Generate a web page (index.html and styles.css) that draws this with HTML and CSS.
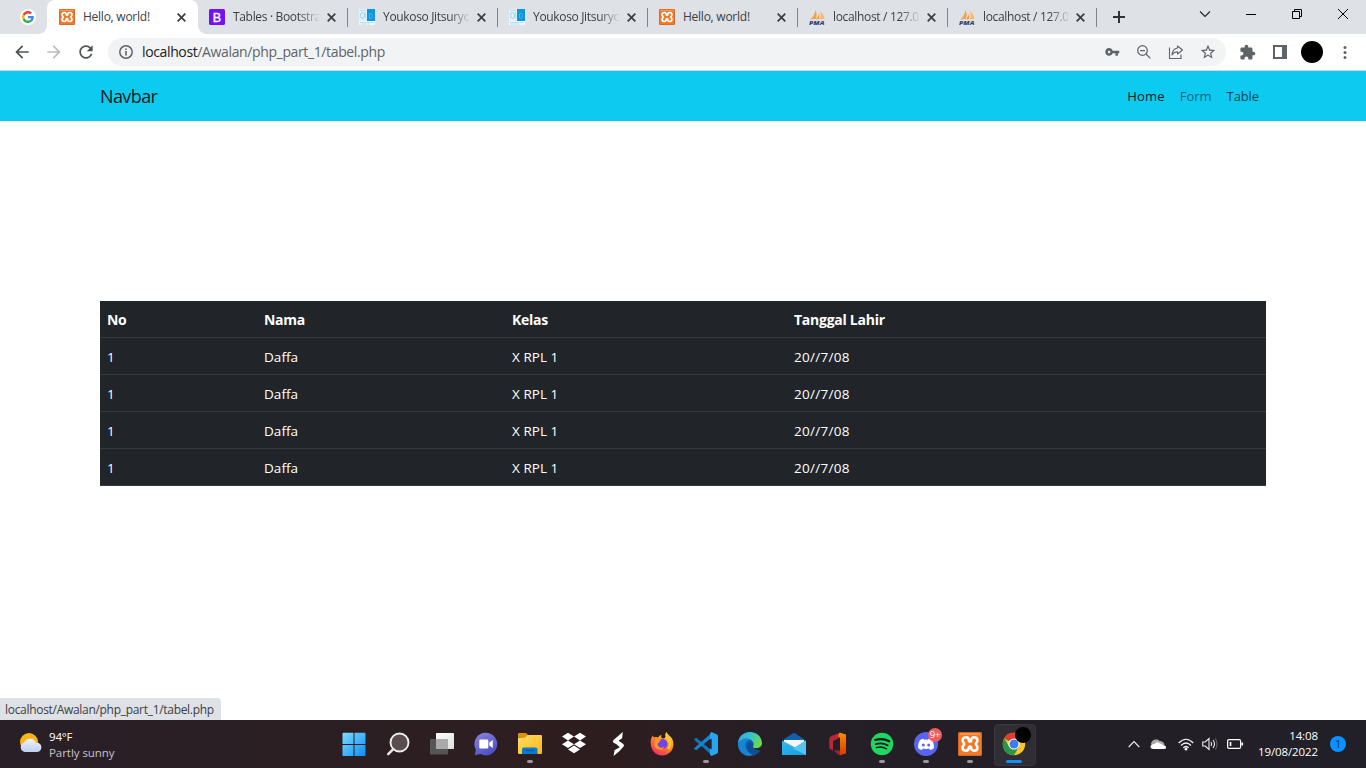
FILE: index.html
```html
<!DOCTYPE html>
<html lang="en">
<head>
<meta charset="utf-8">
<title>Hello, world!</title>
<link rel="stylesheet" href="styles.css">
</head>
<body>
<svg class="defs" width="0" height="0" aria-hidden="true">
  <defs>
    <linearGradient id="gWin" x1="0" y1="0" x2="1" y2="1"><stop offset="0" stop-color="#7fdcff"/><stop offset="1" stop-color="#0b8df5"/></linearGradient>
    <linearGradient id="gChat" x1="0" y1="0" x2="0.6" y2="1"><stop offset="0" stop-color="#8f83dd"/><stop offset="1" stop-color="#4b50c4"/></linearGradient>
    <linearGradient id="gFold" x1="0" y1="0" x2="1" y2="1"><stop offset="0" stop-color="#ffdc68"/><stop offset="1" stop-color="#fdb916"/></linearGradient>
    <linearGradient id="gFox" x1="0.8" y1="0" x2="0.2" y2="1"><stop offset="0" stop-color="#ffe03c"/><stop offset=".45" stop-color="#ff8a1e"/><stop offset="1" stop-color="#f5236d"/></linearGradient>
    <linearGradient id="gEdge" x1="0" y1="0" x2="1" y2=".5"><stop offset="0" stop-color="#2ba8df"/><stop offset=".5" stop-color="#35c1cf"/><stop offset="1" stop-color="#6ad94a"/></linearGradient>
    <linearGradient id="gMail" x1="0" y1="0" x2="1" y2="1"><stop offset="0" stop-color="#35baf0"/><stop offset="1" stop-color="#159be0"/></linearGradient>
    <linearGradient id="gOff" x1="0" y1="0" x2="0" y2="1"><stop offset="0" stop-color="#ff8a00"/><stop offset="1" stop-color="#d83a00"/></linearGradient>
    <linearGradient id="gCloud" x1="0" y1="0" x2="0" y2="1"><stop offset="0" stop-color="#f1f5fc"/><stop offset="1" stop-color="#bccff0"/></linearGradient>
    <linearGradient id="gView" x1="0" y1="0" x2="1" y2="1"><stop offset="0" stop-color="#ffffff"/><stop offset="1" stop-color="#dedede"/></linearGradient>
  </defs>
  <symbol id="xampp" viewBox="0 0 24 24">
    <rect width="24" height="24" rx="1.5" fill="#dc6420"/><rect x="1" y="1" width="22" height="22" rx="1" fill="#f07a2c"/><path d="M2 2h20" stroke="#f9a468" stroke-width="1.200"/>
    <path d="M8 5.300c1.800 0 2.800 1 2.800 2.900q0 1.300 1.200 1.300t1.200-1.300c0-1.900 1-2.900 2.800-2.900 2.200 0 3.400 1.200 3.400 3.300 0 1.800-1.600 2.300-1.600 3.400s1.600 1.600 1.600 3.400c0 2.100-1.200 3.300-3.400 3.300-1.800 0-2.800-1-2.800-2.900q0-1.300-1.200-1.300t-1.200 1.300c0 1.900-1 2.900-2.800 2.900-2.200 0-3.400-1.200-3.400-3.300 0-1.800 1.600-2.300 1.600-3.400S4.600 10.400 4.600 8.600c0-2.100 1.200-3.300 3.400-3.300z" fill="none" stroke="#fff" stroke-width="2.500"/>
  </symbol>
  <symbol id="pma" viewBox="0 0 16 16">
    <path d="M6.500 1C6 5 4 8 2 10.500l5-.8C8 7 7.800 4 6.500 1z" fill="#f6a23b"/><path d="M10.500 0C11 4 9 8 7 10.500l3-.5z" fill="#f89c2c"/><path d="M11 2c3 2.500 4 5 4.500 8l-4.500.2c1-3 1-5 0-8.200z" fill="#f9b964"/><path d="M4.300 4.500C4 7 2.500 9 1 11l2-.4z" fill="#d3c3a5"/>
    <text x="0" y="15.500" font-family="Open Sans, sans-serif" font-size="5.800" font-weight="800" font-style="italic" fill="#3c3f72" textLength="15.500" lengthAdjust="spacingAndGlyphs">PMA</text>
  </symbol>
  <symbol id="youkoso" viewBox="0 0 16 16">
    <rect x="0" width="8" height="12" fill="#dff2fb"/><rect x="8" width="8" height="12" fill="#0b96df"/><rect y="12" width="16" height="4" fill="#eef8fd"/>
    <ellipse cx="3.500" cy="6.500" rx="2" ry="3" fill="none" stroke="#92d4f2"/><path d="M1 1.500h6M6.500 3v7" stroke="#b6e0f4"/><path d="M10.500 4.500h1.500q1.500 0 1.500 2.300T12 9.200h-1.500z" fill="none" stroke="#65b9e6" stroke-width=".7"/><path d="M1 13.500h14M2 15h9" stroke="#9bd7ef" stroke-dasharray="1.500 .8"/>
  </symbol>
  <symbol id="x" viewBox="0 0 9 9"><path d="M.7.7l7.600 7.600M8.300.7L.7 8.300" stroke="#3c4043" stroke-width="1.800"/></symbol>
  <symbol id="back" viewBox="0 0 24 24"><path d="M20 11H7.830l5.590-5.590L12 4l-8 8 8 8 1.410-1.410L7.830 13H20v-2z"/></symbol>
</svg>

<div class="tabs">
  <div class="pin"><svg viewBox="0 0 64 64" width="16" height="16"><circle cx="32" cy="32" r="32" fill="#fff"/><g transform="translate(8 8)"><path fill="#ea4335" d="M24 9.500c3.540 0 6.710 1.220 9.210 3.600l6.850-6.850C35.900 2.380 30.470 0 24 0 14.620 0 6.510 5.380 2.560 13.220l7.980 6.190C12.430 13.720 17.740 9.500 24 9.500z"/><path fill="#4285f4" d="M46.980 24.550c0-1.570-.15-3.090-.38-4.550H24v9.020h12.940c-.58 2.960-2.260 5.480-4.780 7.180l7.730 6c4.510-4.180 7.090-10.360 7.090-17.650z"/><path fill="#fbbc05" d="M10.530 28.590c-.48-1.450-.76-2.990-.76-4.590s.27-3.140.76-4.590l-7.980-6.190C.92 16.460 0 20.120 0 24c0 3.880.92 7.540 2.560 10.780l7.970-6.190z"/><path fill="#34a853" d="M24 48c6.480 0 11.930-2.130 15.890-5.810l-7.730-6c-2.150 1.450-4.920 2.300-8.160 2.300-6.260 0-11.570-4.220-13.470-9.910l-7.980 6.190C6.510 42.620 14.620 48 24 48z"/></g></svg></div>
  <div class="tab active"><svg class="fav"><use href="#xampp"/></svg><span class="title">Hello, world!</span><svg class="close"><use href="#x"/></svg></div>
  <div class="tab"><svg class="fav" viewBox="0 0 16 16"><rect width="16" height="16" rx="1.500" fill="#7412f6"/><text x="8" y="12.500" text-anchor="middle" font-family="Liberation Sans, sans-serif" font-size="12.500" fill="#fff" stroke="#fff" stroke-width=".4">B</text></svg><span class="title fade">Tables · Bootstra</span><svg class="close"><use href="#x"/></svg></div>
  <div class="tab"><svg class="fav"><use href="#youkoso"/></svg><span class="title fade">Youkoso Jitsuryo</span><svg class="close"><use href="#x"/></svg></div>
  <div class="tab"><svg class="fav"><use href="#youkoso"/></svg><span class="title fade">Youkoso Jitsuryo</span><svg class="close"><use href="#x"/></svg></div>
  <div class="tab"><svg class="fav"><use href="#xampp"/></svg><span class="title">Hello, world!</span><svg class="close"><use href="#x"/></svg></div>
  <div class="tab"><svg class="fav"><use href="#pma"/></svg><span class="title fade local">localhost / 127.0</span><svg class="close"><use href="#x"/></svg></div>
  <div class="tab last"><svg class="fav"><use href="#pma"/></svg><span class="title fade local">localhost / 127.0</span><svg class="close"><use href="#x"/></svg></div>
  <svg class="plus" width="12" height="12"><path d="M6 0v12M0 6h12" stroke="#303336" stroke-width="2"/></svg>
  <div class="winctl">
    <svg width="46" height="28"><path d="M18 11.500l5 5 5-5" fill="none" stroke="#222" stroke-width="1.100"/></svg>
    <svg width="46" height="28"><path d="M18 14.500h10" stroke="#000"/></svg>
    <svg width="46" height="28"><path d="M18.500 11.500h7v7h-7zM20.500 11.500v-2h7v7h-2" fill="none" stroke="#000"/></svg>
    <svg width="46" height="28"><path d="M18 9l10 10M28 9L18 19" stroke="#000" stroke-width="1"/></svg>
  </div>
</div>

<div class="toolbar">
  <svg class="nav" viewBox="0 0 24 24"><use href="#back"/></svg>
  <svg class="nav off" viewBox="0 0 24 24"><g transform="translate(24) scale(-1 1)"><use href="#back"/></g></svg>
  <svg class="nav" viewBox="0 0 24 24"><path d="M17.650 6.350C16.200 4.900 14.210 4 12 4c-4.420 0-7.990 3.580-7.990 8s3.570 8 7.990 8c3.730 0 6.840-2.550 7.730-6h-2.080c-.82 2.330-3.040 4-5.650 4-3.310 0-6-2.690-6-6s2.690-6 6-6c1.660 0 3.140.69 4.220 1.780L13 11h7V4l-2.350 2.350z"/></svg>
  <div class="omnibox">
    <svg class="info" width="14" height="14"><circle cx="7" cy="7" r="6.200" fill="none" stroke="#5f6368" stroke-width="1.500"/><path d="M7 6v4.500M7 3.500v1.500" stroke="#5f6368" stroke-width="1.600"/></svg>
    <span class="url"><b>localhost</b>/Awalan/php_part_1/tabel.php</span>
    <svg class="act" viewBox="0 0 24 24"><path d="M12.650 10C11.830 7.670 9.610 6 7 6c-3.310 0-6 2.690-6 6s2.690 6 6 6c2.610 0 4.830-1.670 5.650-4H17v4h4v-4h2v-4H12.650zM7 14c-1.100 0-2-.9-2-2s.9-2 2-2 2 .9 2 2-.9 2-2 2z" transform="translate(1 0) scale(.95) translate(0 .5)"/></svg>
    <svg class="act" viewBox="0 0 16 16"><g fill="none" stroke="#5f6368" stroke-width="1.250"><circle cx="6.500" cy="6.500" r="4.800"/><path d="M10.200 10.200l4.200 4.200M4 6.500h5"/></g></svg>
    <svg class="act" viewBox="0 0 16 16"><g fill="none" stroke="#5f6368" stroke-width="1.100"><path d="M1.500 3.500v11h11.500v-4"/><path d="M9.500 2l5 4-5 4V7.800c-2.500 0-4 .8-5.500 3.200.3-4 2.200-6.500 5.500-7z" stroke-linejoin="round"/></g></svg>
    <svg class="act star" viewBox="1 1 22 22"><path d="M22 9.240l-7.190-.62L12 2 9.190 8.630 2 9.240l5.460 4.730L5.820 21 12 17.270 18.180 21l-1.630-7.030L22 9.240zM12 15.400l-3.760 2.270 1-4.280-3.320-2.880 4.380-.38L12 6.100l1.710 4.040 4.380.38-3.320 2.880 1 4.280L12 15.400z"/></svg>
  </div>
  <svg class="ext" viewBox="0 0 24 24"><path d="M20.500 11H19V7c0-1.100-.9-2-2-2h-4V3.500C13 2.120 11.880 1 10.500 1S8 2.120 8 3.500V5H4c-1.100 0-1.990.9-1.990 2v3.800H3.500c1.490 0 2.700 1.210 2.700 2.700s-1.210 2.700-2.700 2.700H2V20c0 1.100.9 2 2 2h3.800v-1.500c0-1.490 1.210-2.700 2.700-2.700 1.490 0 2.700 1.210 2.700 2.700V22H17c1.100 0 2-.9 2-2v-4h1.500c1.380 0 2.500-1.120 2.500-2.500S21.880 11 20.500 11z"/></svg>
  <svg class="panel" width="14" height="14"><path d="M0 0h14v14H0zM2 2v10h7V2z" fill-rule="evenodd"/></svg>
  <div class="avatar"></div>
  <svg class="dots" width="4" height="16"><circle cx="2" cy="3.500" r="1.500"/><circle cx="2" cy="8.500" r="1.500"/><circle cx="2" cy="13.500" r="1.500"/></svg>
</div>

<main class="page">
  <nav class="navbar">
    <a class="brand">Navbar</a>
    <ul class="links"><li class="current">Home</li><li>Form</li><li class="hovered">Table</li></ul>
  </nav>
  <table class="table">
    <colgroup><col class="c1"><col class="c2"><col class="c3"><col></colgroup>
    <thead><tr><th>No</th><th>Nama</th><th>Kelas</th><th>Tanggal Lahir</th></tr></thead>
    <tbody>
      <tr><td>1</td><td>Daffa</td><td>X RPL 1</td><td class="born">20//7/08</td></tr>
      <tr><td>1</td><td>Daffa</td><td>X RPL 1</td><td class="born">20//7/08</td></tr>
      <tr><td>1</td><td>Daffa</td><td>X RPL 1</td><td class="born">20//7/08</td></tr>
      <tr><td>1</td><td>Daffa</td><td>X RPL 1</td><td class="born">20//7/08</td></tr>
    </tbody>
  </table>
  <div class="status"><span>localhost/Awalan/php_part_1/tabel.php</span></div>
</main>

<footer class="taskbar">
  <div class="weather">
    <svg width="23" height="22" viewBox="0 0 23 22"><circle cx="10" cy="10" r="9" fill="#fdb515"/><path d="M5.500 20a5 5 0 0 1-.3-9.600 6.300 6.300 0 0 1 11.600.3h1a4.600 4.600 0 0 1 0 9.300z" fill="url(#gCloud)"/><path d="M4 14c4-1.500 7 .5 8 2.500" fill="none" stroke="#c5d3ec" stroke-width=".7"/></svg>
    <div><div class="temp">94°F</div><div class="cond">Partly sunny</div></div>
  </div>
  <div class="apps">
    <div class="app"><svg viewBox="0 0 24 24"><path d="M.5 1.500q0-.8.8-.8H11.500V12H.5zM12.500.7H23q.5 0 .5.8V12h-11zM.5 13h11v11H1.300q-.8 0-.8-.8zM12.500 13h11v10.200q0 .8-.8.8H12.500z" fill="url(#gWin)"/></svg></div>
    <div class="app"><svg viewBox="0 0 24 24"><circle cx="13.500" cy="10.500" r="9" fill="#594d4f" stroke="#eee" stroke-width="1.900"/><path d="M7.200 17.200l-5 5" stroke="#e5e5e5" stroke-width="2.500" stroke-linecap="round"/></svg></div>
    <div class="app"><svg viewBox="0 0 24 24"><rect x="6" y="1" width="18" height="16" rx=".7" fill="url(#gView)"/><rect x="0" y="7" width="18" height="15.500" rx=".7" fill="#555" /><rect x="6" y="7" width="12" height="10" fill="#aaa"/></svg></div>
    <div class="app"><svg viewBox="0 0 24 24"><path d="M12 .8a11.300 11.300 0 1 1-5.300 21.300L.8 23.300l1.100-5.600A11.300 11.300 0 0 1 12 .8z" fill="url(#gChat)"/><rect x="5.300" y="7.500" width="9" height="9" rx="1.200" fill="#fff"/><path d="M15.300 10.600l3.500-2.700v8.200l-3.500-2.700z" fill="#fff"/></svg></div>
    <div class="app open"><svg viewBox="0 0 24 24"><path d="M0 5V2q0-1 1-1h7l2.500 2.500L7 6z" fill="#dc9406"/><path d="M0 5.500h7L9.500 3H23q1 0 1 1v17q0 1-1 1H1q-1 0-1-1z" fill="url(#gFold)"/><path d="M4 22v-4.500Q4 15.500 6 15.500h11.500q2 0 2 2V22z" fill="#087bd1"/><path d="M8 18.500h8" stroke="#055b9e" stroke-width="1.300"/></svg></div>
    <div class="app"><svg viewBox="0 0 24 24" fill="#fff"><path d="M6 .8l6 3.800-6 3.800-6-3.800zM18 .8l6 3.800-6 3.800-6-3.800zM6 8.500l6 3.800-6 3.800-6-3.800zM18 8.500l6 3.800-6 3.800-6-3.800zM6 17.400l6-3.800 6 3.800-6 3.800z"/></svg></div>
    <div class="app"><svg viewBox="0 0 24 24" fill="#fff"><path d="M16.800 0l-.7 6.200-4 2.800v4.200l-4.800-2.800q-.8-1.200.2-2.400L12.200 4zM12.300 8.600l5 3.400q1.200 1.200.3 2.600l-4.600 4.800L7.600 24l.9-5.800 5.200-3-2.800-2.600z"/></svg></div>
    <div class="app"><svg viewBox="0 0 24 24"><path d="M1 7c.5-2 1.500-3 2-3.500.2 1 .6 1.500 1 2 1.400-.7 2.800-.5 4 0C9 3.800 10.500 3 11.500 3c-.5 1-.5 2 .2 3C13.500 7 15 6 15.500 5 14.700 3 15.500 1.200 16.500 0c1 3 5.500 4.500 6.500 9 2 8-3.500 14.500-11 14.500S-.7 16 1 7z" fill="url(#gFox)"/><circle cx="12.500" cy="12" r="5" fill="#7542e4"/><path d="M6 7c2.200-.6 4 .2 5.500 1.500-2.700 0-1.700 2.300-4 3.200 0 4 4 5 7 3.300-2 4.200-9 3.500-10.500-2z" fill="#ff982a"/><path d="M16 5c5 3 5 9 2 12" fill="none" stroke="#ffcc37" stroke-width="2.300"/></svg></div>
    <div class="app open"><svg viewBox="0 0 24 24"><path d="M2.200 5.700L18 18.500v5L.5 8q-.6-.6 0-1.200z" fill="#1474b8"/><path d="M2.200 18.300L18 5.500v-5L.5 16q-.6.600 0 1.200z" fill="#1386d1"/><path d="M17.500 0l5.500 2.600q1 .5 1 1.500v15.800q0 1-1 1.500L17.500 24 16 22.500V1.500z" fill="#28a5ee"/><path d="M17.700 6.500v11L10.500 12z" fill="#28222a"/></svg></div>
    <div class="app"><svg viewBox="0 0 24 24"><circle cx="12" cy="12" r="12" fill="#0f5eb2"/><path d="M0 12C.5-4 23-3.500 24 11c0 5-6 7-9 4.500-.8-.7 1-1.500.6-4C14.500 5 3 5 0 12z" fill="url(#gEdge)"/><path d="M0 12c1.500-5 8.500-6.500 12.500-4C5 8 6 19.500 14.500 22.800 7 26.500-.5 19 0 12z" fill="#1686d2"/><path d="M14.500 15c1 4 5 4 8 2.500-2 4-5.500 5.500-8.500 5C8.500 20 8 13 12 10c2 0 4 2 2.500 5z" fill="#104d94"/><path d="M14.800 15.200c3 2 7.500 1 8.800-2l.2 4.300c-3 1.200-6.500 1-9-2.300z" fill="#292128"/></svg></div>
    <div class="app"><svg viewBox="0 0 24 24"><path d="M0 8.500L11 1.300q1-.7 2 0L24 8.500z" fill="#0f62ac"/><path d="M2 8h20v8H2z" fill="#f5f5f5"/><path d="M0 8.500l13 7L24 8.500V23H0z" fill="url(#gMail)"/><path d="M24 8.500L11 16.500 24 23z" fill="#52c5f3"/></svg></div>
    <div class="app"><svg viewBox="0 0 24 24"><path d="M14 .8L6 3.800C4 4.700 3.300 6 3.300 8v8.500l3.700 2V9L15 5z" fill="#bc2638"/><path d="M4 15.500l4 3h7V23l-1.500.5z" fill="#9c2340"/><path d="M13.500.6L20 2.500v19L14 23.300V5.500L12 4.500z" fill="url(#gOff)"/></svg></div>
    <div class="app open"><svg viewBox="0 0 24 24"><circle cx="12" cy="12" r="11.200" fill="#1ed760"/><g fill="none" stroke="#101816" stroke-linecap="round"><path d="M5.200 8c5-1.500 10-.9 14 1.300" stroke-width="2.200"/><path d="M5.800 12c4-1.200 8.500-.7 12 1.400" stroke-width="1.800"/><path d="M6.500 15.600c3.500-1 7-.6 10 1.200" stroke-width="1.500"/></g></svg></div>
    <div class="app open"><svg viewBox="0 0 24 24"><circle cx="12" cy="12" r="12" fill="#5865f2"/><path d="M9.500 6.700l.6 1q1.900-.3 3.800 0l.6-1q2 .3 3.500 1.200c1.600 2.700 2.200 5.500 1.800 8.300-1.300 1-2.700 1.500-3.700 1.800l-1-1.500q-3 .9-6.200 0l-1 1.500c-1-.3-2.400-.8-3.700-1.800-.4-2.800.2-5.600 1.800-8.300q1.500-.9 3.500-1.200z" fill="#fff"/><ellipse cx="9.300" cy="13" rx="1.500" ry="1.600" fill="#5865f2"/><ellipse cx="14.700" cy="13" rx="1.500" ry="1.600" fill="#5865f2"/></svg><span class="badge">9+</span></div>
    <div class="app open"><svg><use href="#xampp"/></svg></div>
    <div class="app chrome"><svg viewBox="0 0 24 24"><circle cx="12" cy="12" r="11.200" fill="#fbc62c"/><path d="M12 12L2.300 6.400A11.200 11.200 0 0 1 21.700 6.400z" fill="#e33b2e"/><path d="M2.300 6.400A11.200 11.200 0 0 0 12 23.200l4.800-8.400L12 12 7.200 14.800z" fill="#27964a"/><circle cx="12" cy="12" r="5.600" fill="#fff"/><circle cx="12" cy="12" r="4.500" fill="#3b7de9"/></svg><span class="dot"></span></div>
  </div>
  <div class="tray">
    <svg class="chev" width="12" height="8"><path d="M.7 7L6 1.500 11.300 7" fill="none" stroke="#eee" stroke-width="1.100"/></svg>
    <svg class="cloud" width="17" height="12"><path d="M1 6.500C1 2 7 0 9.500 3c3-.5 5 2 5 4z" fill="#aaa"/><path d="M3.500 11Q0 11 .5 8q1-2.500 4-2 2-3 5.500-.5 2 0 3 1.500 3.500.5 3 3 0 1-2 1z" fill="#fff"/></svg>
    <svg class="wifi" width="16" height="13"><g fill="none" stroke="#f4f4f4" stroke-width="1.200"><path d="M.7 5q7.300-7.500 14.600 0M3 7.500q5-5 10 0M5.300 9.800q2.700-2.600 5.400 0"/></g><circle cx="8" cy="11" r="1.500" fill="#fff"/></svg>
    <svg class="vol" width="16" height="14"><g fill="none" stroke="#eee" stroke-width="1.100"><path d="M.7 5h2.500L7 1.500v11L3.200 9H.7zM9 5q1.500 2 0 4M11 3q3 4 0 8"/><path d="M13.300 1.500q3.500 5.500 0 11" stroke="#68626a"/></g></svg>
    <svg class="bat" width="17" height="10"><rect x=".6" y=".6" width="13" height="8.800" rx="1.500" fill="none" stroke="#fff" stroke-width="1.200"/><path d="M3.500 3v4M15.200 3.500v3" stroke="#fff" stroke-width="1.700"/></svg>
    <div class="clock"><div class="time">14:08</div><div class="date">19/08/2022</div></div>
    <div class="note">1</div>
  </div>
</footer>
</body>
</html>
```
FILE: styles.css
```css
* { box-sizing: border-box; }
body { margin: 0; width: 1366px; height: 768px; overflow: hidden; display: flex; flex-direction: column; background: #fff; font-family: "Open Sans", "Noto Sans", sans-serif; font-size: 12px; }
svg { display: block; flex: none; }
.defs { position: absolute; }

.tabs { height: 34px; flex: none; background: #dee1e6; display: flex; align-items: flex-start; }
.pin { width: 47px; height: 34px; padding: 9px 0 0 20px; }
.tab { width: 150px; height: 34px; padding-left: 11px; display: flex; align-items: center; position: relative; color: #3c4043; }
.tab:nth-child(2) { width: 151px; padding-left: 12px; }
.tab:nth-child(n+4)::before, .last::after { content: ""; position: absolute; left: -1px; top: 8px; width: 1px; height: 19px; background: #808387; }
.last::after { left: auto; right: 1px; }
.active { background: #fff; border-radius: 8px 8px 0 0; }
.active::before, .active::after { content: ""; position: absolute; bottom: 0; width: 8px; height: 8px; }
.active::before { left: -8px; background: radial-gradient(circle at 0 0, #dee1e6 7.5px, #fff 8px); }
.active::after { right: -8px; background: radial-gradient(circle at 100% 0, #dee1e6 7.5px, #fff 8px); }
.fav { width: 16px; height: 16px; margin-right: 8px; }
.title { width: 86px; margin-right: 8px; white-space: nowrap; letter-spacing: -.25px; line-height: 18px; }
.fade { letter-spacing: -.33px; -webkit-mask-image: linear-gradient(90deg, #000 66px, transparent 88px); mask-image: linear-gradient(90deg, #000 66px, transparent 88px); }
.close { width: 9px; height: 9px; }
.last .title { width: 85px; }
.plus { margin: 11px 0 0 15px; }
.winctl { display: flex; margin-left: auto; }

.toolbar { height: 37px; flex: none; display: flex; align-items: center; padding-left: 12px; border-bottom: 1px solid #d5dade; fill: #5f6368; }
.nav { width: 20px; height: 20px; margin-right: 12px; fill: #4d5156; }
.off { fill: #babcbe; }
.omnibox { width: 1118px; height: 28px; border-radius: 14px; background: #f1f3f4; display: flex; align-items: center; padding: 0 10px 0 11px; }
.info { margin-right: 9px; }
.url { flex: 1; font-size: 14px; letter-spacing: -.37px; color: #5f6368; white-space: nowrap; line-height: 20px; }
.url b { font-weight: 400; color: #202124; }
.act { width: 16px; height: 16px; margin-left: 16px; }
.ext { width: 17px; height: 17px; margin-left: 13px; }
.panel { margin-left: 17px; }
.avatar { width: 22px; height: 22px; border-radius: 50%; background: #000; margin-left: 14px; }
.dots { margin-left: 20px; }

.page { flex: 1; position: relative; }
.navbar { height: 50px; background: #0dcaf0; padding: 0 107px 0 100px; display: flex; align-items: center; justify-content: space-between; }
.brand { font-size: 18px; color: rgba(0,0,0,.9); letter-spacing: -.6px; }
.links { display: flex; gap: 15px; margin: 0; padding: 0; list-style: none; font-size: 13px; color: rgba(0,0,0,.55); }
.links .current { color: rgba(0,0,0,.9); letter-spacing: .2px; }
.links .hovered { color: rgba(0,0,0,.7); letter-spacing: -.1px; }
.table { width: 1166px; margin: 180px 0 0 100px; table-layout: fixed; border-collapse: separate; border-spacing: 0; background: #212529; color: #fff; font-size: 14px; }
.c1 { width: 157px; } .c2 { width: 248px; } .c3 { width: 282px; }
.table th, .table td { height: 37px; padding: 1px 7px 0; text-align: left; border-bottom: 1px solid #373b3e; letter-spacing: -.26px; line-height: 20px; }
.table td { font-size: 13.5px; letter-spacing: .05px; }
.table .born { letter-spacing: .3px; }
.status { position: absolute; left: 0; bottom: 0; width: 221px; height: 22px; background: #dee1e6; border-radius: 0 4px 0 0; padding: 3px 5px; color: #3c4043; letter-spacing: -.3px; line-height: 17px; white-space: nowrap; }

.taskbar { height: 48px; flex: none; background: linear-gradient(90deg, #291f27 0, #2b1f23 24%, #2e1d1f 44%, #251f26 58%, #211f28 100%); display: flex; color: #fff; }
.weather { width: 332px; display: flex; padding: 12px 0 0 19px; gap: 7px; font-size: 11.5px; line-height: 16px; }
.weather > div { margin-top: -3px; }
.temp { letter-spacing: -.2px; }
.cond { color: #c6c2c6; letter-spacing: -.05px; }
.apps { display: flex; }
.app { width: 44px; height: 48px; padding: 12px 10px; position: relative; }
.app svg { width: 24px; height: 24px; }
.open::after, .chrome::after { content: ""; position: absolute; left: 19px; top: 40px; width: 6px; height: 3px; border-radius: 2px; background: #9b9598; }
.chrome::before { content: ""; position: absolute; left: 2px; top: 4px; width: 40px; height: 40px; background: #302d35; border: 1px solid #39363d; border-radius: 4px; }
.chrome svg { position: relative; }
.chrome::after { width: 16px; left: 14px; background: #0a91ff; }
.badge { position: absolute; left: 24px; top: 8px; width: 14px; height: 14px; border-radius: 7px; background: #f15b5f; font-size: 9.5px; line-height: 13px; text-align: center; letter-spacing: -.3px; }
.dot { position: absolute; left: 23px; top: 7px; width: 16px; height: 16px; border-radius: 50%; background: #000; }
.tray { margin-left: auto; display: flex; align-items: center; padding-right: 20px; }
.cloud { margin-left: 10px; }
.wifi { margin-left: 11px; }
.vol { margin-left: 8px; }
.bat { margin-left: 9px; }
.clock { width: 74px; text-align: right; font-size: 11.5px; line-height: 16px; letter-spacing: -.1px; }
.note { width: 16px; height: 16px; margin-left: 12px; border-radius: 50%; background: #0a91ff; color: #1d2d45; font-size: 10px; line-height: 16px; text-align: center; }
```
